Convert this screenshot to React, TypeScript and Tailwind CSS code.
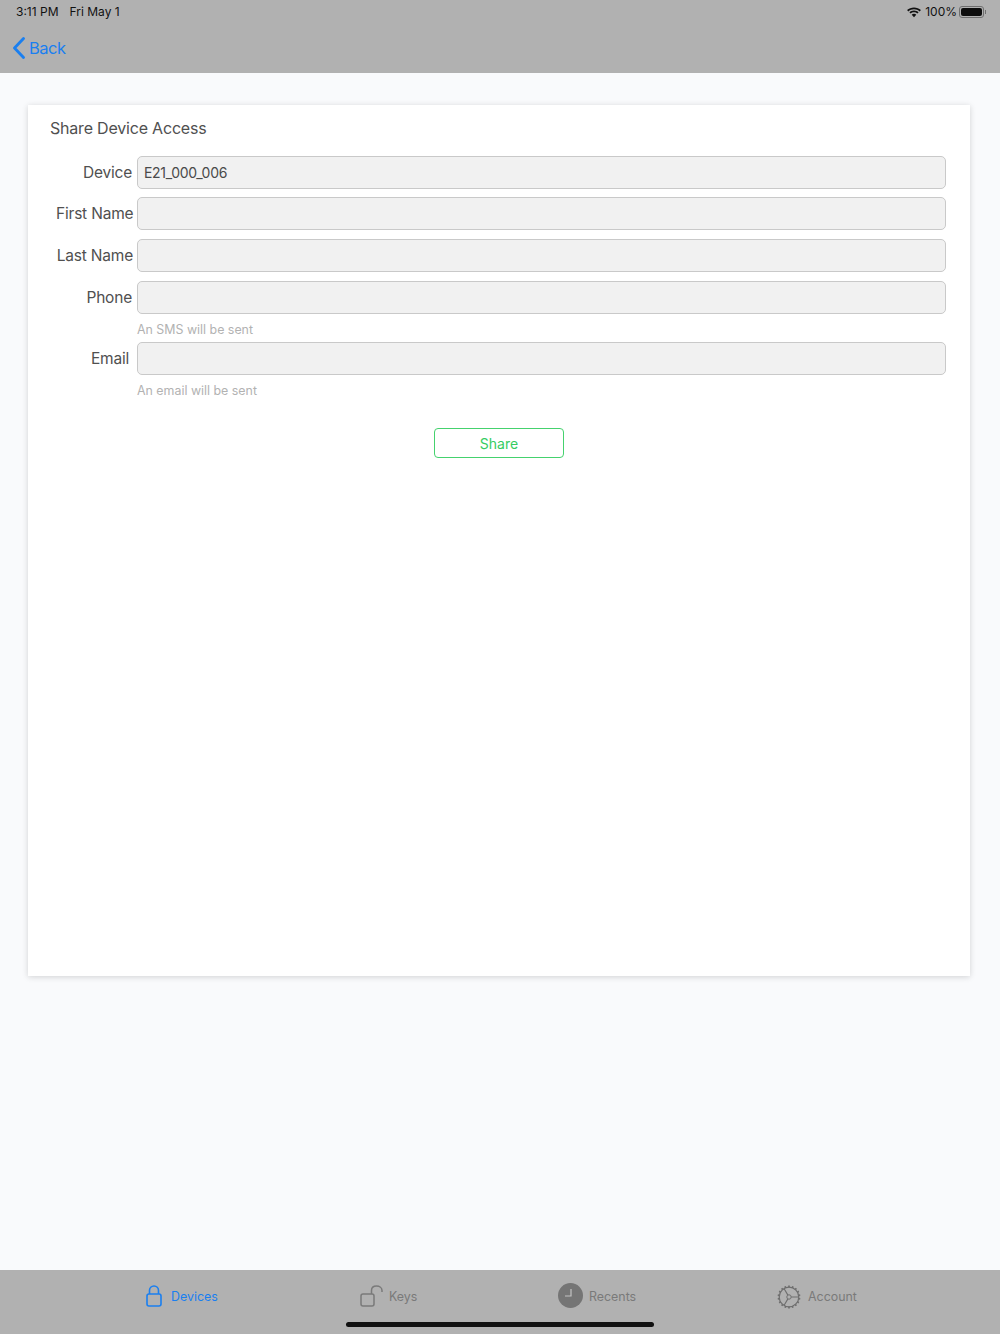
function BackChevron() {
    return (
        <svg width="14" height="22" viewBox="0 0 14 22" fill="none">
            <path d="M11.5 1.5L2.5 11L11.5 20.5" stroke="#1a7ff0" strokeWidth="2.8" strokeLinecap="round" strokeLinejoin="round" />
        </svg>
    )
}

function WifiIcon() {
    return (
        <svg width="14" height="11" viewBox="0 0 14 11" fill="#111">
            <path d="M7 2.2C9.2 2.2 11.2 3 12.7 4.4L13.9 3.1C12.1 1.4 9.7 .4 7 .4S1.9 1.4.1 3.1L1.3 4.4C2.8 3 4.8 2.2 7 2.2Z" />
            <path d="M7 5.3C8.3 5.3 9.5 5.8 10.4 6.6L11.6 5.3C10.4 4.2 8.8 3.5 7 3.5S3.6 4.2 2.4 5.3L3.6 6.6C4.5 5.8 5.7 5.3 7 5.3Z" />
            <path d="M7 6.8C6.1 6.8 5.4 7.1 4.7 7.7L7 10.3L9.3 7.7C8.6 7.1 7.9 6.8 7 6.8Z" />
        </svg>
    )
}

function BatteryIcon() {
    return (
        <div className="flex items-center gap-[1px] -ml-[2px]">
            <div className="w-[25px] h-[12px] rounded-[3px] border border-solid border-[#6f6f6f] p-[1px]">
                <div className="w-full h-full rounded-[2px] bg-[#0d0d0d]"></div>
            </div>
            <div className="w-[1px] h-[4px] bg-[#6f6f6f]"></div>
        </div>
    )
}

function LockIcon() {
    return (
        <svg width="16" height="22" viewBox="0 0 16 22" fill="none" stroke="#1a7ff0" strokeWidth="1.6">
            <rect x="1" y="9" width="14" height="12" rx="2" />
            <path d="M3.5 9V5.5C3.5 3 5.4 1 8 1S12.5 3 12.5 5.5V9" />
        </svg>
    )
}

function UnlockIcon() {
    return (
        <svg width="23" height="22" viewBox="0 0 23 22" fill="none" stroke="#7a7a7a" strokeWidth="1.5">
            <rect x="1" y="9" width="13" height="12" rx="2" />
            <path d="M11.5 9V5.5C11.5 3 13.4 1 16.5 1S22 3 22 5.5V7" />
        </svg>
    )
}

function ClockIcon() {
    return (
        <svg width="25" height="25" viewBox="0 0 25 25" fill="none" className="-mt-[2px]">
            <circle cx="12.5" cy="12.5" r="12.5" fill="#757575" />
            <path d="M13 6V13H7" stroke="#c4c4c4" strokeWidth="1.2" />
        </svg>
    )
}

function GearIcon() {
    const teeth = Array.from({ length: 18 }, (_, i) => i * 20)
    return (
        <svg width="24" height="24" viewBox="0 0 24 24" fill="none" stroke="#6e6e6e" className="mt-[2px]">
            <circle cx="12" cy="12" r="9.8" strokeWidth="1.2" />
            <circle cx="12" cy="12" r="2.2" strokeWidth="1" />
            {teeth.map((deg) => (
                <path key={deg} d="M12 0.6V2.4" strokeWidth="1.7" transform={`rotate(${deg} 12 12)`} />
            ))}
            <path d="M14.2 12H21.5M10.9 10.1L7 3.5M10.9 13.9L7 20.5" strokeWidth="1.1" />
        </svg>
    )
}

function FormRow({ label, value, labelClass, className }: { label: string, value?: string, labelClass?: string, className?: string }) {
    return (
        <div className={`flex items-center ${className ?? ""}`}>
            <div className={`w-[81px] shrink-0 whitespace-nowrap text-right text-[15.5px] tracking-[-0.2px] leading-[20px] text-[#505050] ${labelClass ?? "pr-[5px]"}`}>{label}</div>
            <div className="flex-1 h-[33px] px-[6px] flex items-center rounded-[5px] bg-[#f1f1f1] border border-solid border-[#c9c9c9] text-[14px] tracking-[-0.3px] text-[#4a4a4a]">{value}</div>
        </div>
    )
}

function Hint({ children }: { children: string }) {
    return <p className="mt-[8px] pl-[81px] text-[12.4px] leading-[16px] text-[#b2b2b2]">{children}</p>
}

function TabItem({ icon, label, active, className }: { icon: any, label: string, active?: boolean, className?: string }) {
    return (
        <div className={`flex items-center ${className ?? ""}`}>
            {icon}
            <span className={`mt-[2px] text-[12.4px] leading-[16px] ${active ? "text-[#1a7ff0]" : "text-[#7a7a7a]"}`}>{label}</span>
        </div>
    )
}

export default function App() {
    return (
        <div className="w-[1000px] h-[1334px] flex flex-col bg-[#f9fafc] font-['Inter',sans-serif] overflow-hidden">
            <header className="h-[73px] shrink-0 bg-[#b1b1b1] flex flex-col">
                <div className="h-[24px] flex items-center justify-between pl-[16px] pr-[14px] text-[12px] text-[#111]">
                    <div className="flex gap-[11px]">
                        <span>3:11 PM</span>
                        <span>Fri May 1</span>
                    </div>
                    <div className="flex items-center gap-[4px]">
                        <WifiIcon />
                        <span>100%</span>
                        <BatteryIcon />
                    </div>
                </div>
                <div className="flex items-center gap-[3px] pl-[12px] pt-[4px] h-[44px] text-[16.5px] tracking-[-0.5px] text-[#1a7ff0]">
                    <BackChevron />
                    <span>Back</span>
                </div>
            </header>

            <main className="flex-1 pt-[32px] pl-[28px] pr-[30px]">
                <section className="h-[871px] bg-white shadow-[0_1px_6px_rgba(0,0,0,0.16)] pl-[28px] pr-[24px]">
                    <h1 className="pt-[13px] -ml-[6px] text-[16px] tracking-[-0.2px] leading-[20px] text-[#505050]">Share Device Access</h1>
                    <div className="mt-[18px] flex flex-col">
                        <FormRow label="Device" value="E21_000_006" />
                        <FormRow label="First Name" className="mt-[8px]" />
                        <FormRow label="Last Name" labelClass="pr-[4px]" className="mt-[9px]" />
                        <FormRow label="Phone" className="mt-[9px]" />
                        <Hint>An SMS will be sent</Hint>
                        <FormRow label="Email" labelClass="pr-[8px]" className="mt-[4px]" />
                        <Hint>An email will be sent</Hint>
                    </div>
                    <div className="mt-[29px] flex justify-center pr-[4px]">
                        <button className="w-[130px] h-[30px] rounded-[4px] border-[1.5px] border-solid border-[#45d26e] bg-white text-[14px] text-[#36cc62]">Share</button>
                    </div>
                </section>
            </main>

            <footer className="h-[64px] shrink-0 bg-[#b1b1b1] flex flex-col">
                <div className="h-[52px] flex items-center pl-[146px]">
                    <TabItem icon={<LockIcon />} label="Devices" active className="w-[214px] gap-[9px]" />
                    <TabItem icon={<UnlockIcon />} label="Keys" className="w-[198px] gap-[6px]" />
                    <TabItem icon={<ClockIcon />} label="Recents" className="w-[219px] gap-[6px]" />
                    <TabItem icon={<GearIcon />} label="Account" className="gap-[7px]" />
                </div>
                <div className="w-[308px] h-[5px] mx-auto rounded-full bg-[#111]"></div>
            </footer>
        </div>
    )
}
